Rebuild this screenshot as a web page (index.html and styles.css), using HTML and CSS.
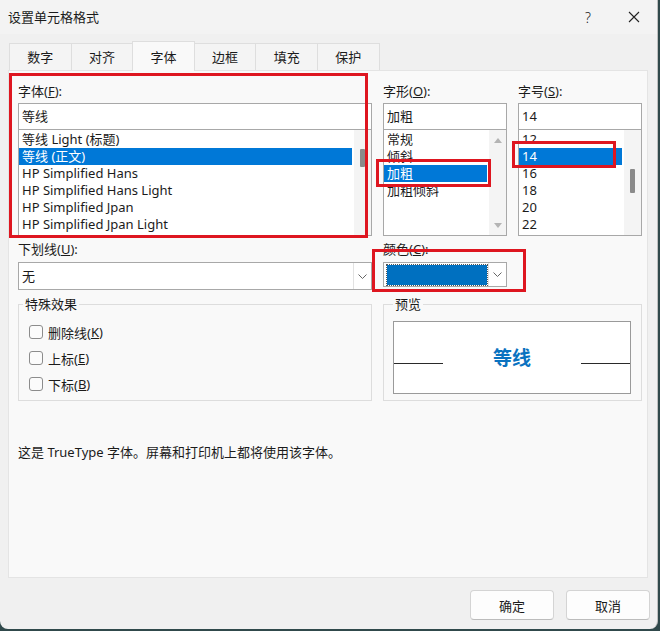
FILE: index.html
```html
<!DOCTYPE html>
<html lang="zh-CN">

<head>
    <meta charset="UTF-8">
    <title>设置单元格格式</title>
    <link rel="stylesheet" href="styles.css">
</head>

<body>
    <div class="dialog">
        <div class="titlebar">
            <span class="title">设置单元格格式</span>
            <span class="ctrl help">?</span>
            <span class="ctrl close">
                <svg width="12" height="12" viewBox="0 0 12 12"><path d="M1 1L11 11M11 1L1 11" stroke="#222" stroke-width="1.1" fill="none"/></svg>
            </span>
        </div>

        <div class="tabs">
            <div class="tab">数字</div>
            <div class="tab">对齐</div>
            <div class="tab active">字体</div>
            <div class="tab">边框</div>
            <div class="tab">填充</div>
            <div class="tab">保护</div>
        </div>

        <div class="panel">
            <div class="grid">
                <div class="field">
                    <div class="label">字体(<u>F</u>):</div>
                    <div class="textbox">等线</div>
                    <div class="list">
                        <div class="items">
                            <div class="item">等线 Light (标题)</div>
                            <div class="item sel">等线 (正文)</div>
                            <div class="item">HP Simplified Hans</div>
                            <div class="item">HP Simplified Hans Light</div>
                            <div class="item">HP Simplified Jpan</div>
                            <div class="item">HP Simplified Jpan Light</div>
                        </div>
                        <div class="vscroll"><span class="thumb font-thumb"></span></div>
                    </div>
                </div>

                <div class="field">
                    <div class="label">字形(<u>O</u>):</div>
                    <div class="textbox">加粗</div>
                    <div class="list">
                        <div class="items">
                            <div class="item">常规</div>
                            <div class="item">倾斜</div>
                            <div class="item sel">加粗</div>
                            <div class="item">加粗倾斜</div>
                        </div>
                        <div class="vscroll arrows">
                            <svg width="8" height="5" viewBox="0 0 8 5"><path d="M0 5L4 0L8 5Z" fill="#b4b4b4"/></svg>
                            <svg width="8" height="5" viewBox="0 0 8 5"><path d="M0 0L4 5L8 0Z" fill="#b4b4b4"/></svg>
                        </div>
                    </div>
                </div>

                <div class="field">
                    <div class="label">字号(<u>S</u>):</div>
                    <div class="textbox">14</div>
                    <div class="list">
                        <div class="items">
                            <div class="item">12</div>
                            <div class="item sel">14</div>
                            <div class="item">16</div>
                            <div class="item">18</div>
                            <div class="item">20</div>
                            <div class="item">22</div>
                        </div>
                        <div class="vscroll"><span class="thumb size-thumb"></span></div>
                    </div>
                </div>
            </div>

            <div class="grid mid">
                <div class="field">
                    <div class="label">下划线(<u>U</u>):</div>
                    <div class="dropdown">
                        <div class="value">无</div>
                        <div class="arrow">
                            <svg width="9" height="5" viewBox="0 0 9 5"><path d="M0.5 0.5L4.5 4.5L8.5 0.5" stroke="#666" fill="none"/></svg>
                        </div>
                    </div>
                </div>
                <div class="field">
                    <div class="label">颜色(<u>C</u>):</div>
                    <div class="dropdown color">
                        <div class="value"><span class="swatch"></span></div>
                        <div class="arrow">
                            <svg width="9" height="5" viewBox="0 0 9 5"><path d="M0.5 0.5L4.5 4.5L8.5 0.5" stroke="#666" fill="none"/></svg>
                        </div>
                    </div>
                </div>
            </div>

            <div class="grid groups">
                <fieldset class="effects">
                    <legend>特殊效果</legend>
                    <div class="check"><span class="box"></span>删除线(<u>K</u>)</div>
                    <div class="check"><span class="box"></span>上标(<u>E</u>)</div>
                    <div class="check"><span class="box"></span>下标(<u>B</u>)</div>
                </fieldset>
                <fieldset class="preview">
                    <legend>预览</legend>
                    <div class="sample">
                        <span class="rule"></span>
                        <span class="sample_text">等线</span>
                        <span class="rule"></span>
                    </div>
                </fieldset>
            </div>

            <p class="note">这是 TrueType 字体。屏幕和打印机上都将使用该字体。</p>
        </div>

        <div class="buttons">
            <button class="btn">确定</button>
            <button class="btn">取消</button>
        </div>

        <!-- red marks drawn on top of the screenshot -->
        <div class="mark m1"></div>
        <div class="mark m2"></div>
        <div class="mark m3"></div>
        <div class="mark m4"></div>
    </div>
</body>
</html>
```

FILE: styles.css
```css
* {
    box-sizing: border-box;
}

body {
    margin: 0;
    width: 660px;
    height: 631px;
    background: #30494b;
    font-family: "Noto Sans", "Noto Sans CJK SC", sans-serif;
    font-size: 13px;
    color: #1b1b1b;
    overflow: hidden;
}

.dialog {
    position: relative;
    width: 658px;
    height: 629px;
    background: #f0f0f0;
    border-right: 1px solid #bfbfbf;
    border-radius: 0 0 8px 8px;
}

.titlebar {
    height: 34px;
    display: flex;
    align-items: center;
    padding-left: 8px;
    background: #f3f3f3;
}

.title {
    flex: 1;
    line-height: 16px;
}

.ctrl {
    width: 46px;
    display: flex;
    justify-content: center;
    align-items: center;
}

.help {
    font-size: 14px;
    font-weight: 300;
}

.tabs {
    display: flex;
    align-items: flex-end;
    height: 29px;
    margin-top: 7px;
    padding-left: 9px;
}

.tab {
    width: 62.6px;
    height: 27px;
    line-height: 26px;
    text-align: center;
    background: #f4f4f4;
    border: 1px solid #dedede;
    border-bottom: none;
    margin-right: -1px;
}

.tab.active {
    height: 30px;
    line-height: 30px;
    background: #f9f9f9;
    margin-bottom: -1px;
    position: relative;
    z-index: 1;
}

.panel {
    margin-left: 8px;
    width: 640px;
    height: 508px;
    background: #f9f9f9;
    border: 1px solid #e4e4e4;
    padding: 12px 4px 0 9px;
}

.grid {
    display: grid;
    grid-template-columns: 354px 124px 124px;
    column-gap: 11px;
}

.label {
    line-height: 16px;
    margin-bottom: 4px;
    white-space: nowrap;
}

.textbox {
    height: 27px;
    line-height: 25px;
    padding-left: 3px;
    background: #fff;
    border: 1px solid #a8a8a8;
}

.list {
    display: flex;
    height: 107px;
    margin-top: -1px;
    background: #fff;
    border: 1px solid #a8a8a8;
    padding-top: 1px;
    overflow: hidden;
}

.items {
    flex: 1;
    margin-right: 2px;
}

.item {
    height: 17px;
    line-height: 17px;
    padding-left: 3px;
    white-space: nowrap;
}

.item.sel {
    background: #0078d7;
    color: #fff;
}

.vscroll {
    width: 17px;
    margin-top: -1px;
    background: #f4f4f4;
    display: flex;
    flex-direction: column;
    align-items: center;
}

.thumb {
    width: 5px;
    background: #8a8a8a;
    border-radius: 1px;
}

.font-thumb {
    height: 18px;
    margin-top: 19px;
}

.size-thumb {
    height: 24px;
    margin-top: 39px;
}

.arrows {
    justify-content: space-between;
    padding: 8px 0 7px;
}

.mid {
    margin-top: 5px;
}

.mid .label {
    margin-bottom: 5px;
}

.dropdown {
    display: flex;
    height: 28px;
    background: #fff;
    border: 1px solid #a8a8a8;
}

.dropdown .value {
    flex: 1;
    line-height: 26px;
    padding-left: 3px;
}

.dropdown .arrow {
    width: 18px;
    display: flex;
    align-items: center;
    justify-content: center;
    border-left: 1px solid #e2e2e2;
}

.dropdown.color {
    height: 25px;
    margin-top: 1px;
}

.dropdown.color .value {
    padding: 2px 1px 1px 3px;
}

.swatch {
    display: block;
    height: 100%;
    background: #0070c0;
    outline: 1px dotted #555;
    outline-offset: 0;
}

.groups {
    margin-top: 6px;
}

fieldset {
    margin: 0;
    min-width: 0;
    height: 105px;
    border: 1px solid #dddddd;
}

legend {
    padding: 0 2px;
    line-height: 16px;
}

.effects {
    padding: 7px 0 0 4px;
}

.check {
    display: flex;
    align-items: center;
    height: 26px;
    padding-left: 6px;
}

.box {
    width: 14px;
    height: 14px;
    margin-right: 5px;
    border: 1px solid #8c8c8c;
    border-radius: 3px;
    background: #fbfbfb;
}

.preview {
    grid-column: 2 / 4;
    padding: 9px 0 0 9px;
}

.sample {
    display: flex;
    align-items: center;
    width: 238px;
    height: 73px;
    background: #fff;
    border: 1px solid #9a9a9a;
}

.rule {
    width: 49px;
    height: 1px;
    margin-top: 12px;
    background: #2a2a2a;
}

.sample_text {
    flex: 1;
    text-align: center;
    font-size: 19px;
    font-weight: bold;
    color: #0a72c0;
    line-height: 24px;
}

.note {
    margin: 43px 0 0;
    line-height: 16px;
}

.buttons {
    display: flex;
    justify-content: flex-end;
    gap: 12px;
    padding: 12px 7px 0 0;
}

.btn {
    width: 84px;
    height: 30px;
    font-family: inherit;
    font-size: 13px;
    color: #1b1b1b;
    background: #fdfdfd;
    border: 1px solid #d4d4d4;
    border-bottom-color: #bcbcbc;
    border-radius: 4px;
}

.mark {
    position: absolute;
    border: 3px solid #de1620;
}

.m1 {
    left: 9px;
    top: 73px;
    width: 359px;
    height: 165px;
}

.m2 {
    left: 376px;
    top: 159px;
    width: 115px;
    height: 28px;
}

.m3 {
    left: 512px;
    top: 141px;
    width: 104px;
    height: 27px;
}

.m4 {
    left: 372px;
    top: 249px;
    width: 154px;
    height: 43px;
}
```
